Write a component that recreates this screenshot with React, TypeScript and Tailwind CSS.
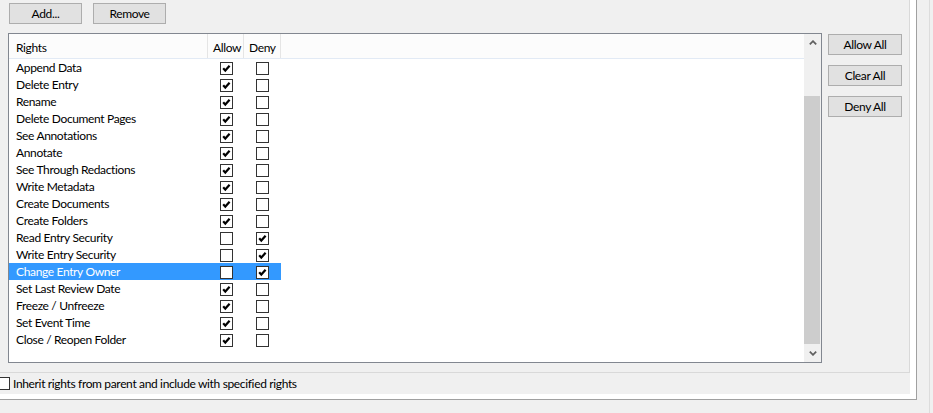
import { type ReactNode } from 'react';

interface RightRow {
  name: string;
  allow: boolean;
  deny: boolean;
}

const rights: RightRow[] = [
  { name: 'Append Data', allow: true, deny: false },
  { name: 'Delete Entry', allow: true, deny: false },
  { name: 'Rename', allow: true, deny: false },
  { name: 'Delete Document Pages', allow: true, deny: false },
  { name: 'See Annotations', allow: true, deny: false },
  { name: 'Annotate', allow: true, deny: false },
  { name: 'See Through Redactions', allow: true, deny: false },
  { name: 'Write Metadata', allow: true, deny: false },
  { name: 'Create Documents', allow: true, deny: false },
  { name: 'Create Folders', allow: true, deny: false },
  { name: 'Read Entry Security', allow: false, deny: true },
  { name: 'Write Entry Security', allow: false, deny: true },
  { name: 'Change Entry Owner', allow: false, deny: true },
  { name: 'Set Last Review Date', allow: true, deny: false },
  { name: 'Freeze / Unfreeze', allow: true, deny: false },
  { name: 'Set Event Time', allow: true, deny: false },
  { name: 'Close / Reopen Folder', allow: true, deny: false },
];

const SELECTED = 'Change Entry Owner';

function CheckBox({ checked }: { checked: boolean }) {
  return (
    <span className="flex w-[13px] h-[13px] shrink-0 border border-[#333333] bg-white">
      {checked && (
        <svg width="11" height="11" viewBox="0 0 11 11">
          <polyline points="2.2,5.2 4.3,7.6 8.6,2.8" fill="none" stroke="#000" strokeWidth="2.2" />
        </svg>
      )}
    </span>
  );
}

function WinButton({ children, className }: { children: ReactNode; className: string }) {
  return (
    <button
      className={`h-[21px] border border-[#adadad] bg-[#e1e1e1] text-[12px] leading-none text-black flex items-center justify-center ${className}`}
    >
      {children}
    </button>
  );
}

function Chevron({ down }: { down?: boolean }) {
  return (
    <svg width="8" height="5" viewBox="0 0 8 5" className={down ? 'rotate-180' : ''}>
      <polyline points="0.8,4.3 4,1.2 7.2,4.3" fill="none" stroke="#606060" strokeWidth="1.8" />
    </svg>
  );
}

export default function App() {
  return (
    <div
      className="w-[933px] h-[413px] bg-[#f0f0f0] flex overflow-hidden text-black tracking-[-0.35px]"
      style={{ fontFamily: 'Lato, "Open Sans", sans-serif' }}
    >
      {/* outer frame with 3D edge */}
      <div className="w-[917px] h-[400px] shrink-0 bg-white pr-[6px] pb-[5px] border-r border-b border-[#a0a0a0]">
        <div className="w-[910px] h-[394px] bg-[#f0f0f0] flex flex-col">
          <div className="h-[373px] border-r border-b border-[#d9d9d9] pl-[8px] pt-[3px]">
            <div className="flex gap-[11px] ml-[1px]">
              <WinButton className="w-[73px]">Add...</WinButton>
              <WinButton className="w-[73px]">Remove</WinButton>
            </div>

            <div className="flex gap-[6px] mt-[9px]">
              {/* rights list */}
              <div className="w-[814px] h-[330px] border border-[#828790] bg-white flex">
                <div className="flex-1">
                  <div className="h-[25px] flex border-b border-[#e2eaf5] bg-[#fcfcfc] text-[12px]">
                    <div className="w-[199px] border-r border-[#e5e5e5] pl-[7px] pt-[3px] flex items-center">Rights</div>
                    <div className="w-[36px] border-r border-[#e5e5e5] pl-[5px] pt-[3px] flex items-center">Allow</div>
                    <div className="w-[37px] border-r border-[#e5e5e5] pl-[5px] pt-[3px] flex items-center">Deny</div>
                  </div>
                  {rights.map((r) => {
                    const sel = r.name === SELECTED;
                    return (
                      <div
                        key={r.name}
                        className={`h-[17px] w-[272px] flex text-[12px] ${sel ? 'bg-[#3399ff] text-white' : ''}`}
                      >
                        <div className="w-[199px] pl-[7px] leading-[17px] whitespace-nowrap">{r.name}</div>
                        <div className="w-[36px] pl-[12px] pt-[3px]">
                          <CheckBox checked={r.allow} />
                        </div>
                        <div className="w-[37px] pl-[12px] pt-[3px]">
                          <CheckBox checked={r.deny} />
                        </div>
                      </div>
                    );
                  })}
                </div>

                {/* scrollbar */}
                <div className="w-[17px] bg-[#f0f0f0] flex flex-col">
                  <div className="h-[17px] flex items-center justify-center">
                    <Chevron />
                  </div>
                  <div className="h-[45px]" />
                  <div className="h-[248px] mr-[1px] bg-[#cdcdcd]" />
                  <div className="flex-1 flex items-center justify-center">
                    <Chevron down />
                  </div>
                </div>
              </div>

              {/* side buttons */}
              <div className="flex flex-col gap-[10px] mt-[1px]">
                <WinButton className="w-[74px]">Allow All</WinButton>
                <WinButton className="w-[74px]">Clear All</WinButton>
                <WinButton className="w-[74px]">Deny All</WinButton>
              </div>
            </div>
          </div>

          {/* inherit option */}
          <div className="h-[21px] flex items-center gap-[3px] ml-[-3px] text-[12px]">
            <CheckBox checked={false} />
            <span className="whitespace-nowrap">Inherit rights from parent and include with specified rights</span>
          </div>
        </div>
      </div>
      <div className="ml-[12px] w-px h-full bg-[#dcdcdc]" />
    </div>
  );
}
